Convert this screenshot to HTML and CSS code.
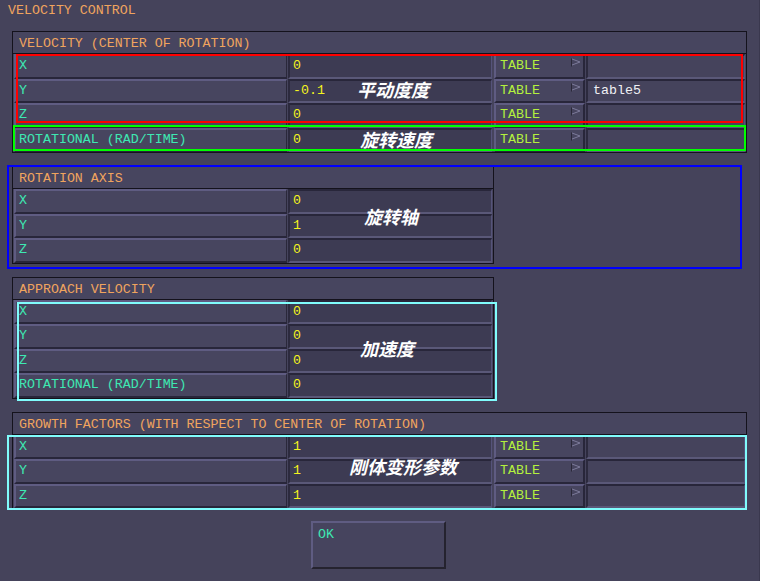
FILE: index.html
```html
<!DOCTYPE html>
<html>
<head>
<meta charset="utf-8">
<link rel="stylesheet" href="styles.css">
</head>
<body>
<div class="win">
  <div class="title">VELOCITY CONTROL</div>
  <div class="body">
    <div class="section wide s1">
      <div class="sec-head">VELOCITY (CENTER OF ROTATION)</div>
      <div class="rows">
        <div class="row"><div class="lbl">X</div><div class="val">0</div><div class="tbtn"><span>TABLE</span><svg class="flag" width="11" height="9" viewBox="0 0 11 9"><path d="M1.5 0.5V8.5" stroke="#2a2838" stroke-width="1"/><path d="M2 1L10 4L2 7" fill="none" stroke="#7c7a9a" stroke-width="1"/></svg></div><div class="tfield"></div></div>
        <div class="row"><div class="lbl">Y</div><div class="val">-0.1</div><div class="tbtn"><span>TABLE</span><svg class="flag" width="11" height="9" viewBox="0 0 11 9"><path d="M1.5 0.5V8.5" stroke="#2a2838" stroke-width="1"/><path d="M2 1L10 4L2 7" fill="none" stroke="#7c7a9a" stroke-width="1"/></svg></div><div class="tfield">table5</div></div>
        <div class="row"><div class="lbl">Z</div><div class="val">0</div><div class="tbtn"><span>TABLE</span><svg class="flag" width="11" height="9" viewBox="0 0 11 9"><path d="M1.5 0.5V8.5" stroke="#2a2838" stroke-width="1"/><path d="M2 1L10 4L2 7" fill="none" stroke="#7c7a9a" stroke-width="1"/></svg></div><div class="tfield"></div></div>
        <div class="row"><div class="lbl">ROTATIONAL (RAD/TIME)</div><div class="val">0</div><div class="tbtn"><span>TABLE</span><svg class="flag" width="11" height="9" viewBox="0 0 11 9"><path d="M1.5 0.5V8.5" stroke="#2a2838" stroke-width="1"/><path d="M2 1L10 4L2 7" fill="none" stroke="#7c7a9a" stroke-width="1"/></svg></div><div class="tfield"></div></div>
      </div>
    </div>

    <div class="section narrow s2">
      <div class="sec-head">ROTATION AXIS</div>
      <div class="rows">
        <div class="row"><div class="lbl">X</div><div class="val">0</div></div>
        <div class="row"><div class="lbl">Y</div><div class="val">1</div></div>
        <div class="row"><div class="lbl">Z</div><div class="val">0</div></div>
      </div>
    </div>

    <div class="section narrow s3">
      <div class="sec-head">APPROACH VELOCITY</div>
      <div class="rows">
        <div class="row"><div class="lbl">X</div><div class="val">0</div></div>
        <div class="row"><div class="lbl">Y</div><div class="val">0</div></div>
        <div class="row"><div class="lbl">Z</div><div class="val">0</div></div>
        <div class="row"><div class="lbl">ROTATIONAL (RAD/TIME)</div><div class="val">0</div></div>
      </div>
    </div>

    <div class="section wide s4">
      <div class="sec-head">GROWTH FACTORS (WITH RESPECT TO CENTER OF ROTATION)</div>
      <div class="rows">
        <div class="row"><div class="lbl">X</div><div class="val">1</div><div class="tbtn"><span>TABLE</span><svg class="flag" width="11" height="9" viewBox="0 0 11 9"><path d="M1.5 0.5V8.5" stroke="#2a2838" stroke-width="1"/><path d="M2 1L10 4L2 7" fill="none" stroke="#7c7a9a" stroke-width="1"/></svg></div><div class="tfield"></div></div>
        <div class="row"><div class="lbl">Y</div><div class="val">1</div><div class="tbtn"><span>TABLE</span><svg class="flag" width="11" height="9" viewBox="0 0 11 9"><path d="M1.5 0.5V8.5" stroke="#2a2838" stroke-width="1"/><path d="M2 1L10 4L2 7" fill="none" stroke="#7c7a9a" stroke-width="1"/></svg></div><div class="tfield"></div></div>
        <div class="row"><div class="lbl">Z</div><div class="val">1</div><div class="tbtn"><span>TABLE</span><svg class="flag" width="11" height="9" viewBox="0 0 11 9"><path d="M1.5 0.5V8.5" stroke="#2a2838" stroke-width="1"/><path d="M2 1L10 4L2 7" fill="none" stroke="#7c7a9a" stroke-width="1"/></svg></div><div class="tfield"></div></div>
      </div>
    </div>

    <div class="okwrap"><div class="okbtn">OK</div></div>
  </div>

  <div class="mark m-red"></div>
  <div class="mark m-green"></div>
  <div class="mark m-blue"></div>
  <div class="mark m-cyan1"></div>
  <div class="mark m-cyan2"></div>

  <div class="note n1">平动度度</div>
  <div class="note n2">旋转速度</div>
  <div class="note n3">旋转轴</div>
  <div class="note n4">加速度</div>
  <div class="note n5">刚体变形参数</div>
</div>
</body>
</html>
```

FILE: styles.css
```css
html, body {
  margin: 0;
  padding: 0;
  background: #45435b;
}
.win {
  position: relative;
  width: 760px;
  height: 581px;
  overflow: hidden;
  font-family: "Liberation Mono", "DejaVu Sans Mono", monospace;
  font-size: 13.3px;
  line-height: 15px;
  box-sizing: border-box;
  border-right: 1px solid #3a384e;
}
.title {
  height: 31px;
  box-sizing: border-box;
  padding: 3px 8px 0;
  color: #f0a45e;
}
.body {
  display: flex;
  flex-direction: column;
  align-items: flex-start;
  padding-left: 12px;
  gap: 13px;
}
.section {
  border: 1px solid #14121c;
  background: #46445d;
}
.wide { width: 733px; }
.narrow { width: 480px; }
.sec-head {
  height: 22px;
  box-sizing: border-box;
  padding: 4px 0 0 6px;
  border-bottom: 1px solid #14121c;
  color: #f0a45e;
  background: #47455f;
}
.rows {
  display: flex;
  flex-direction: column;
  padding: 0 1px;
}
.row {
  display: flex;
  height: 24.5px;
}
.lbl, .val, .tbtn, .tfield {
  box-sizing: border-box;
  height: 100%;
  padding-top: 2px;
  white-space: nowrap;
}
.lbl {
  width: 273px;
  margin-right: 1px;
  padding-left: 3px;
  color: #3ee8b2;
  background: #47455f;
  border-top: 2px solid #5f5c82;
  border-left: 2px solid #5f5c82;
  border-bottom: 2px solid #28263a;
  border-right: 1px solid #2a283a;
}
.val {
  width: 204px;
  padding-left: 3px;
  color: #f4f41e;
  background: #3d3b53;
  border-top: 2px solid #28263a;
  border-left: 2px solid #2c2a3e;
  border-bottom: 2px solid #5a5878;
  border-right: 1px solid #55537a;
}
.tbtn {
  width: 91px;
  margin-left: 2px;
  margin-right: 1px;
  padding-left: 4px;
  padding-right: 2px;
  display: flex;
  justify-content: space-between;
  align-items: flex-start;
  color: #b4f03e;
  background: #47455f;
  border-top: 2px solid #5f5c82;
  border-left: 2px solid #5f5c82;
  border-bottom: 2px solid #28263a;
  border-right: 2px solid #28263a;
}
.flag {
  margin-top: 0;
  display: block;
}
.tfield {
  width: 159px;
  padding-left: 5px;
  color: #f0f0f4;
  background: #45435c;
  border-top: 2px solid #28263a;
  border-left: 2px solid #2c2a3e;
  border-bottom: 2px solid #5a5878;
  border-right: 1px solid #55537a;
}
.okwrap {
  padding-left: 299px;
  margin-top: -1px;
}
.okbtn {
  width: 135px;
  height: 48px;
  box-sizing: border-box;
  padding: 4px 5px;
  color: #3ee8b2;
  background: #46445e;
  border-top: 2px solid #5f5c82;
  border-left: 2px solid #5f5c82;
  border-bottom: 2px solid #25232f;
  border-right: 2px solid #25232f;
}

/* annotation overlays */
.mark {
  position: absolute;
  box-sizing: border-box;
  border: 2px solid;
  pointer-events: none;
}
.m-red   { left: 16px; top: 54px;  width: 727px; height: 69px;  border-color: #ff0000; }
.m-green { left: 13px; top: 125px; width: 733px; height: 26px;  border-color: #00ff00; }
.m-blue  { left: 7px;  top: 165px; width: 735px; height: 104px; border-color: #0000ff; }
.m-cyan1 { left: 17px; top: 302px; width: 480px; height: 99px;  border-color: #80fcfc; }
.m-cyan2 { left: 7px;  top: 435px; width: 740px; height: 75px;  border-color: #80fcfc; }

.note {
  position: absolute;
  font-family: "Noto Sans CJK SC", sans-serif;
  font-size: 18px;
  line-height: 20px;
  font-weight: bold;
  font-style: italic;
  color: #ffffff;
  white-space: nowrap;
}
.n1 { left: 357px; top: 79px; }
.n2 { left: 360px; top: 129px; }
.n3 { left: 364px; top: 206px; }
.n4 { left: 360px; top: 338px; }
.n5 { left: 349px; top: 456px; }
```
